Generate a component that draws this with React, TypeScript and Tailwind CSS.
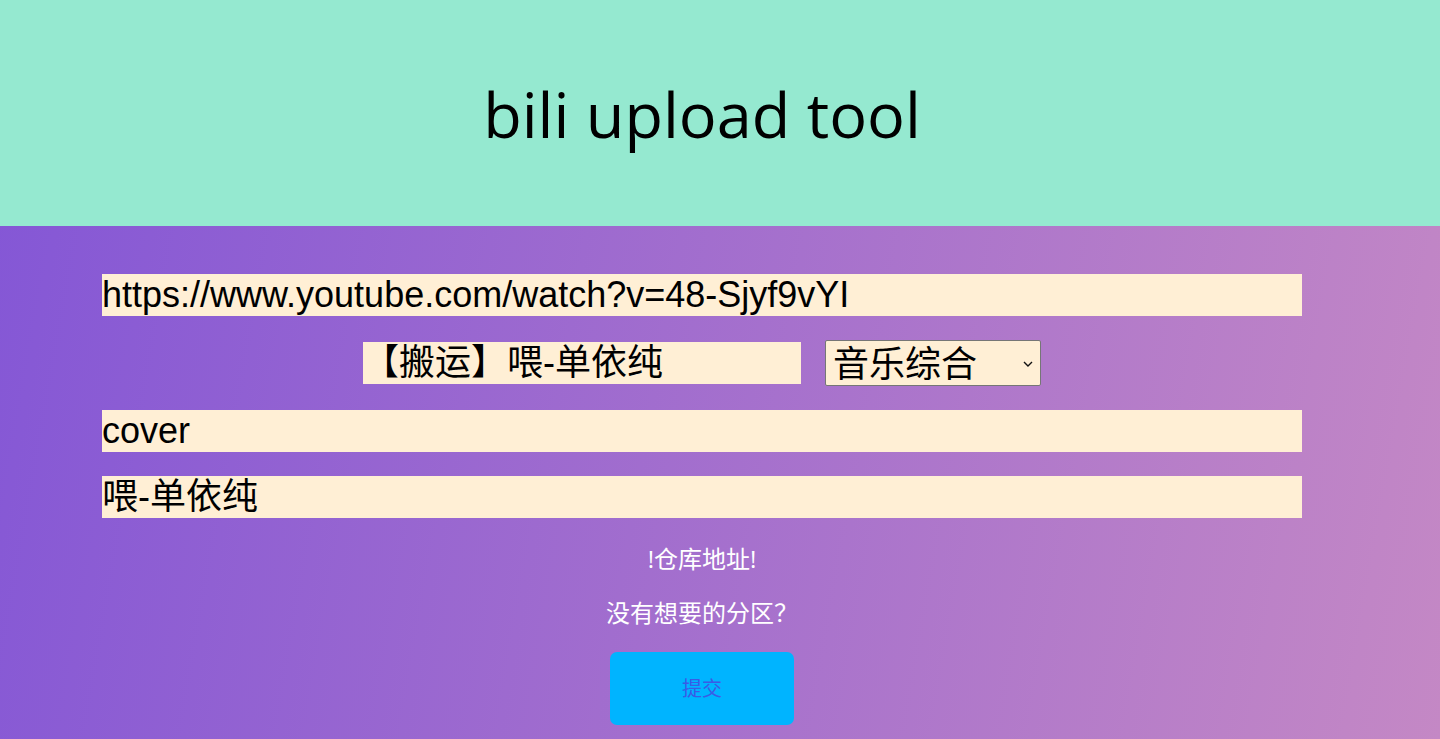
import React from "react";

export default function App() {
  const inputCls =
    "block h-[42px] bg-[#ffefd5] text-black text-[36px] leading-[42px] p-0 outline-none border-0 [font-family:'Liberation_Sans','Noto_Sans_CJK_SC',sans-serif]";
  return (
    <div className="min-h-[739px] w-full bg-[linear-gradient(100deg,#8356d6,#c488c5)] [font-family:'Open_Sans','Noto_Sans_CJK_SC',sans-serif]">
      <header className="h-[226px] bg-[#95e9d0] flex items-center justify-center pr-[36px]">
        <h1 className="text-[63px] font-normal text-black leading-none [font-family:'Open_Sans','Noto_Sans_CJK_SC',sans-serif]">
          bili upload tool
        </h1>
      </header>
      <div className="ml-[102px] w-[1200px] pt-[48px] flex flex-col items-center">
        <input
          className={inputCls + " w-[1200px]"}
          defaultValue="https://www.youtube.com/watch?v=48-Sjyf9vYI"
        />
        <div className="mt-[26px] h-[42px] flex items-center gap-[24px]">
          <input className={inputCls + " w-[438px]"} defaultValue="【搬运】喂-单依纯" />
          <div className="relative w-[216px] h-[46px] border border-[#767676] bg-[#ffefd5] rounded-[2px] flex items-center">
            <span className="pl-[7px] pb-[5px] text-[36px] leading-none text-black [font-family:'Noto_Sans_CJK_SC',sans-serif]">
              音乐综合
            </span>
            <svg
              className="absolute right-[7px] top-[20px]"
              width="10"
              height="6"
              viewBox="0 0 10 6"
              fill="none"
            >
              <path d="M1 1l4 4 4-4" stroke="#111" strokeWidth="1.4" />
            </svg>
          </div>
        </div>
        <input className={inputCls + " w-[1200px] mt-[26px]"} defaultValue="cover" />
        <input className={inputCls + " w-[1200px] mt-[24px]"} defaultValue="喂-单依纯" />
        <p className="mt-[26px] text-white text-[24px] leading-[30px]">!仓库地址!</p>
        <p className="mt-[24px] text-white text-[24px] leading-[30px]">没有想要的分区？</p>
        <button className="mt-[24px] w-[184px] h-[73px] rounded-[7px] bg-[#00b4ff] text-[#3a5be6] text-[20px] leading-none">
          提交
        </button>
      </div>
    </div>
  );
}
